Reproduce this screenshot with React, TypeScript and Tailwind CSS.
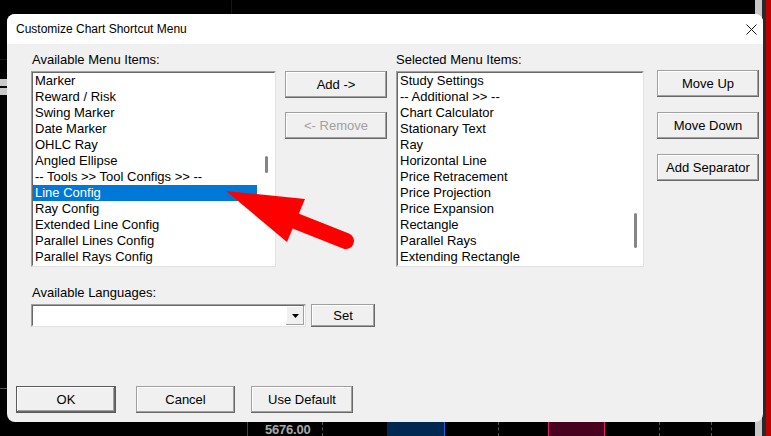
import type { ReactNode } from 'react';

const available = [
  'Marker',
  'Reward / Risk',
  'Swing Marker',
  'Date Marker',
  'OHLC Ray',
  'Angled Ellipse',
  '-- Tools >> Tool Configs >> --',
  'Line Config',
  'Ray Config',
  'Extended Line Config',
  'Parallel Lines Config',
  'Parallel Rays Config',
];

const selected = [
  'Study Settings',
  '-- Additional >> --',
  'Chart Calculator',
  'Stationary Text',
  'Ray',
  'Horizontal Line',
  'Price Retracement',
  'Price Projection',
  'Price Expansion',
  'Rectangle',
  'Parallel Rays',
  'Extending Rectangle',
];

interface WinButtonProps {
  children: ReactNode;
  className?: string;
  disabled?: boolean;
  isDefault?: boolean;
}

function WinButton({ children, className = '', disabled, isDefault }: WinButtonProps) {
  return (
    <div
      className={
        'flex items-center justify-center bg-[#f0f0f0] text-[13px] leading-none ' +
        (disabled ? 'text-[#a0a0a0] ' : 'text-black ') +
        (isDefault
          ? 'border border-[#5a5a5a] shadow-[inset_-1px_-1px_0_#696969,inset_1px_1px_0_#ffffff,inset_-2px_-2px_0_#a0a0a0] '
          : 'shadow-[inset_-1px_-1px_0_#696969,inset_1px_1px_0_#a0a0a0,inset_-2px_-2px_0_#a0a0a0,inset_2px_2px_0_#ffffff] ') +
        className
      }
    >
      {children}
    </div>
  );
}

interface ListBoxProps {
  items: string[];
  selectedIndex?: number;
  thumbTop: number;
  thumbHeight: number;
  thumbLeft: number;
  className?: string;
}

function ListBox({ items, selectedIndex, thumbTop, thumbHeight, thumbLeft, className = '' }: ListBoxProps) {
  return (
    <div className={'border border-t-[#a0a0a0] border-l-[#a0a0a0] border-b-[#e3e3e3] border-r-[#e3e3e3] ' + className}>
      <div className="flex h-full border border-t-[#696969] border-l-[#696969] border-b-[#ffffff] border-r-[#ffffff] bg-white">
        <div className="flex-1 flex flex-col">
          {items.map((item, i) => (
            <div
              key={item}
              className={
                'h-[16px] pl-[2px] text-[13px] leading-[16px] whitespace-nowrap ' +
                (i === selectedIndex ? 'bg-[#0078d7] text-white' : 'text-black')
              }
            >
              {item}
            </div>
          ))}
        </div>
        <div className="w-[17px] flex flex-col">
          <div
            className="w-[3px] rounded-full bg-[#858585]"
            style={{ marginTop: thumbTop, height: thumbHeight, marginLeft: thumbLeft }}
          />
        </div>
      </div>
    </div>
  );
}

function ChartBackground() {
  return (
    <>
      {/* bits of the chart behind the dialog */}
      <div className="absolute left-[231px] top-0 w-px h-[14px] bg-[#0000c8]" />
      <div className="absolute left-0 top-[59px] w-[7px] h-px bg-[#0000c8]" />
      <div className="absolute left-0 top-[79px] w-[7px] h-[7px] bg-[#c8c8c8]" />
      <div className="absolute left-0 top-[88px] w-[7px] h-[7px] bg-[#c8c8c8]" />
      <div className="absolute left-0 top-[388px] w-[7px] h-px bg-[#505050]" />
      <div className="absolute right-[9px] top-0 w-[7px] h-full bg-[#c8c8c8]" />
      <div className="absolute right-[5px] top-0 w-[4px] h-full bg-[#2a2a2a]" />
      <div className="absolute right-0 top-0 w-[5px] h-full bg-[#c00000]" />

      <div className="absolute left-[247px] top-[422px] w-px h-[14px] bg-[#2040a0]" />
      <div className="absolute left-[265px] top-[423px] text-[13px] font-bold leading-[13px] text-[#a8a8a8] tracking-[-0.2px]">
        5676.00
      </div>
      <div className="absolute left-[322px] top-[422px] h-[14px] border-l border-dashed border-[#555555]" />
      <div className="absolute left-[498px] top-[422px] h-[14px] border-l border-dashed border-[#555555]" />
      <div className="absolute left-[659px] top-[422px] h-[14px] border-l border-dashed border-[#555555]" />
      <div className="absolute left-[711px] top-[422px] h-[14px] border-l border-dashed border-[#555555]" />
      <div className="absolute left-[387px] top-[422px] w-[58px] h-[14px] bg-[#002850] border-r border-[#1a66d8]" />
      <div className="absolute left-[548px] top-[422px] w-[57px] h-[14px] bg-[#48001f] border-x border-[#e0206a]" />
    </>
  );
}

export default function App() {
  return (
    <div className="relative w-[771px] h-[436px] bg-black overflow-hidden font-['Liberation_Sans',Arial,sans-serif]">
      <ChartBackground />

      <div className="absolute left-[7px] top-[14px] w-[756px] h-[408px] rounded-[8px] bg-[#f0f0f0] overflow-hidden flex flex-col">
        {/* Title bar */}
        <div className="h-[30px] bg-white flex items-center justify-between pl-[9px] pr-[6px]">
          <span className="text-[12px] text-black">Customize Chart Shortcut Menu</span>
          <svg width="11" height="11" viewBox="0 0 11 11" className="mt-[1px]">
            <path d="M0.5 0.5 L10.5 10.5 M10.5 0.5 L0.5 10.5" stroke="#1a1a1a" strokeWidth="1" />
          </svg>
        </div>

        {/* Body */}
        <div className="flex-1 flex flex-col">
          <div className="flex pt-[8px] pl-[24px]">
            <div className="w-[245px]">
              <div className="h-[19px] pl-[1px] text-[13px] leading-[16px]">Available Menu Items:</div>
              <ListBox items={available} selectedIndex={7} thumbTop={83} thumbHeight={17} thumbLeft={8} className="h-[196px]" />
            </div>

            <div className="ml-[9px] w-[102px] pt-[19px] flex flex-col gap-[14px]">
              <WinButton className="h-[27px]">Add -&gt;</WinButton>
              <WinButton className="h-[27px]" disabled>
                &lt;- Remove
              </WinButton>
            </div>

            <div className="ml-[9px] w-[248px]">
              <div className="h-[19px] text-[13px] leading-[16px]">Selected Menu Items:</div>
              <ListBox items={selected} thumbTop={140} thumbHeight={35} thumbLeft={9} className="h-[196px]" />
            </div>

            <div className="ml-[13px] w-[102px] pt-[18px] flex flex-col gap-[15px]">
              <WinButton className="h-[27px]">Move Up</WinButton>
              <WinButton className="h-[27px]">Move Down</WinButton>
              <WinButton className="h-[27px]">Add Separator</WinButton>
            </div>
          </div>

          <div className="mt-[18px] pl-[24px]">
            <div className="h-[19px] pl-[1px] text-[13px] leading-[16px]">Available Languages:</div>
            <div className="flex">
              <div className="w-[275px] h-[23px] border border-t-[#a0a0a0] border-l-[#a0a0a0] border-b-[#e3e3e3] border-r-[#e3e3e3]">
                <div className="h-full flex justify-end bg-white border border-t-[#696969] border-l-[#696969] border-b-[#ffffff] border-r-[#ffffff]">
                  <div className="w-[18px] h-full flex items-center justify-center bg-[#f0f0f0] shadow-[inset_-1px_-1px_0_#a0a0a0,inset_1px_1px_0_#ffffff]">
                    <svg width="7" height="4" viewBox="0 0 7 4">
                      <path d="M0 0 H7 L3.5 4 Z" fill="#000" />
                    </svg>
                  </div>
                </div>
              </div>
              <WinButton className="ml-[5px] w-[64px] h-[23px]">Set</WinButton>
            </div>
          </div>

          <div className="mt-auto pb-[9px] pl-[9px] flex">
            <WinButton className="w-[100px] h-[27px]" isDefault>
              OK
            </WinButton>
            <WinButton className="ml-[20px] w-[99px] h-[27px]">Cancel</WinButton>
            <WinButton className="ml-[16px] w-[102px] h-[27px]">Use Default</WinButton>
          </div>
        </div>
      </div>

      {/* red pointer arrow drawn over the dialog */}
      <svg className="absolute left-0 top-0 pointer-events-none" width="771" height="436" viewBox="0 0 771 436">
        <polygon points="226,191 305,199 287,242" fill="#ff0000" />
        <line x1="293" y1="220" x2="346" y2="241" stroke="#ff0000" strokeWidth="16" strokeLinecap="round" />
      </svg>
    </div>
  );
}
